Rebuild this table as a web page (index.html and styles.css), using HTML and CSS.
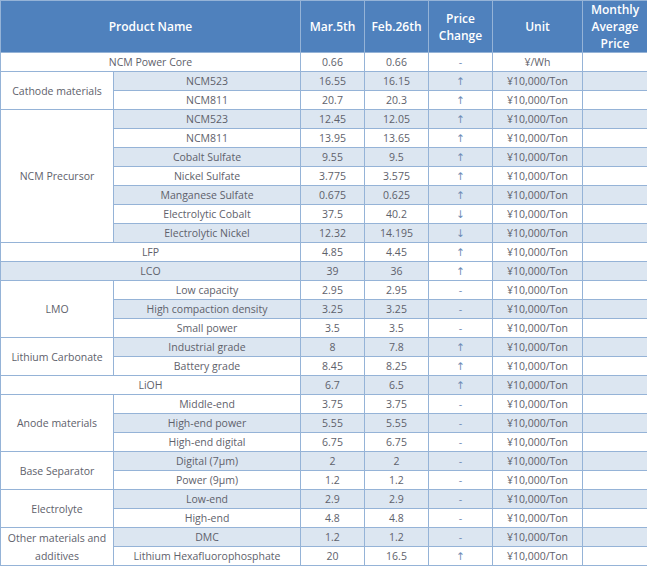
FILE: index.html
```html
<!DOCTYPE html>
<html lang="en">
<head>
<meta charset="utf-8">
<title>Battery Material Prices</title>
<link rel="stylesheet" href="styles.css">
</head>
<body>
<table class="prices">
  <colgroup>
    <col class="c-group">
    <col class="c-sub">
    <col class="c-num">
    <col class="c-num">
    <col class="c-num">
    <col class="c-unit">
    <col class="c-avg">
  </colgroup>
  <thead>
    <tr>
      <th colspan="2">Product Name</th>
      <th>Mar.5th</th>
      <th>Feb.26th</th>
      <th>Price<br>Change</th>
      <th>Unit</th>
      <th>Monthly<br>Average<br>Price</th>
    </tr>
  </thead>
  <tbody>
    <tr><td colspan="2">NCM Power Core</td><td>0.66</td><td>0.66</td><td class="chg">-</td><td>¥/Wh</td><td></td></tr>
    <tr class="alt"><td rowspan="2" class="grp">Cathode materials</td><td>NCM523</td><td>16.55</td><td>16.15</td><td class="chg">↑</td><td>¥10,000/Ton</td><td></td></tr>
    <tr><td>NCM811</td><td>20.7</td><td>20.3</td><td class="chg">↑</td><td>¥10,000/Ton</td><td></td></tr>
    <tr class="alt"><td rowspan="7" class="grp">NCM Precursor</td><td>NCM523</td><td>12.45</td><td>12.05</td><td class="chg">↑</td><td>¥10,000/Ton</td><td></td></tr>
    <tr><td>NCM811</td><td>13.95</td><td>13.65</td><td class="chg">↑</td><td>¥10,000/Ton</td><td></td></tr>
    <tr class="alt"><td>Cobalt Sulfate</td><td>9.55</td><td>9.5</td><td class="chg">↑</td><td>¥10,000/Ton</td><td></td></tr>
    <tr><td>Nickel Sulfate</td><td>3.775</td><td>3.575</td><td class="chg">↑</td><td>¥10,000/Ton</td><td></td></tr>
    <tr class="alt"><td>Manganese Sulfate</td><td>0.675</td><td>0.625</td><td class="chg">↑</td><td>¥10,000/Ton</td><td></td></tr>
    <tr><td>Electrolytic Cobalt</td><td>37.5</td><td>40.2</td><td class="chg">↓</td><td>¥10,000/Ton</td><td></td></tr>
    <tr class="alt"><td>Electrolytic Nickel</td><td>12.32</td><td>14.195</td><td class="chg">↓</td><td>¥10,000/Ton</td><td></td></tr>
    <tr><td colspan="2">LFP</td><td>4.85</td><td>4.45</td><td class="chg">↑</td><td>¥10,000/Ton</td><td></td></tr>
    <tr class="alt"><td colspan="2">LCO</td><td>39</td><td>36</td><td class="chg plain">↑</td><td>¥10,000/Ton</td><td></td></tr>
    <tr><td rowspan="3" class="grp">LMO</td><td>Low capacity</td><td>2.95</td><td>2.95</td><td class="chg">-</td><td>¥10,000/Ton</td><td></td></tr>
    <tr class="alt"><td>High compaction density</td><td>3.25</td><td>3.25</td><td class="chg">-</td><td>¥10,000/Ton</td><td></td></tr>
    <tr><td>Small power</td><td>3.5</td><td>3.5</td><td class="chg">-</td><td>¥10,000/Ton</td><td></td></tr>
    <tr class="alt"><td rowspan="2" class="grp">Lithium Carbonate</td><td>Industrial grade</td><td>8</td><td>7.8</td><td class="chg">↑</td><td>¥10,000/Ton</td><td></td></tr>
    <tr><td>Battery grade</td><td>8.45</td><td>8.25</td><td class="chg">↑</td><td>¥10,000/Ton</td><td></td></tr>
    <tr class="alt"><td colspan="2" class="plain">LiOH</td><td>6.7</td><td>6.5</td><td class="chg">↑</td><td>¥10,000/Ton</td><td></td></tr>
    <tr><td rowspan="3" class="grp">Anode materials</td><td>Middle-end</td><td>3.75</td><td>3.75</td><td class="chg">-</td><td>¥10,000/Ton</td><td></td></tr>
    <tr class="alt"><td>High-end power</td><td>5.55</td><td>5.55</td><td class="chg">-</td><td>¥10,000/Ton</td><td></td></tr>
    <tr><td>High-end digital</td><td>6.75</td><td>6.75</td><td class="chg">-</td><td>¥10,000/Ton</td><td></td></tr>
    <tr class="alt"><td rowspan="2" class="grp">Base Separator</td><td>Digital (7μm)</td><td>2</td><td>2</td><td class="chg">-</td><td>¥10,000/Ton</td><td></td></tr>
    <tr><td>Power (9μm)</td><td>1.2</td><td>1.2</td><td class="chg">-</td><td>¥10,000/Ton</td><td></td></tr>
    <tr class="alt"><td rowspan="2" class="grp">Electrolyte</td><td>Low-end</td><td>2.9</td><td>2.9</td><td class="chg">-</td><td>¥10,000/Ton</td><td></td></tr>
    <tr><td>High-end</td><td>4.8</td><td>4.8</td><td class="chg">-</td><td>¥10,000/Ton</td><td></td></tr>
    <tr class="alt"><td rowspan="2" class="grp">Other materials and additives</td><td>DMC</td><td>1.2</td><td>1.2</td><td class="chg">-</td><td>¥10,000/Ton</td><td></td></tr>
    <tr><td>Lithium Hexafluorophosphate</td><td>20</td><td>16.5</td><td class="chg">↑</td><td>¥10,000/Ton</td><td></td></tr>
  </tbody>
</table>
</body>
</html>
```

FILE: styles.css
```css
html, body {
  margin: 0;
  padding: 0;
  background: #ffffff;
  overflow: hidden;
}

.prices {
  table-layout: fixed;
  width: 648px;
  border-collapse: separate;
  border-spacing: 0;
  border-left: 1px solid #95b3d7;
  border-top: 1px solid #95b3d7;
  font-family: "Open Sans", "Noto Sans", "DejaVu Sans", sans-serif;
  font-size: 10.5px;
  color: #5e616b;
}

.c-group { width: 113px; }
.c-sub { width: 187px; }
.c-num { width: 64px; }
.c-unit { width: 90px; }
.c-avg { width: 65px; }

.prices th,
.prices td {
  box-sizing: border-box;
  border-right: 1px solid #95b3d7;
  border-bottom: 1px solid #95b3d7;
  text-align: center;
  vertical-align: middle;
  padding: 0 2px;
}

.prices th {
  height: 52px;
  background: #4f81bd;
  color: #ffffff;
  font-weight: 600;
  font-size: 12px;
  line-height: 17px;
}

.prices td {
  height: 19px;
  line-height: 18px;
  white-space: nowrap;
}

.prices tr.alt td {
  background: #dce6f1;
}

.prices tr.alt td.grp,
.prices tr.alt td.plain {
  background: #ffffff;
}

.prices td.grp {
  white-space: normal;
}

.prices td.chg {
  color: #6f8bb5;
}
```
